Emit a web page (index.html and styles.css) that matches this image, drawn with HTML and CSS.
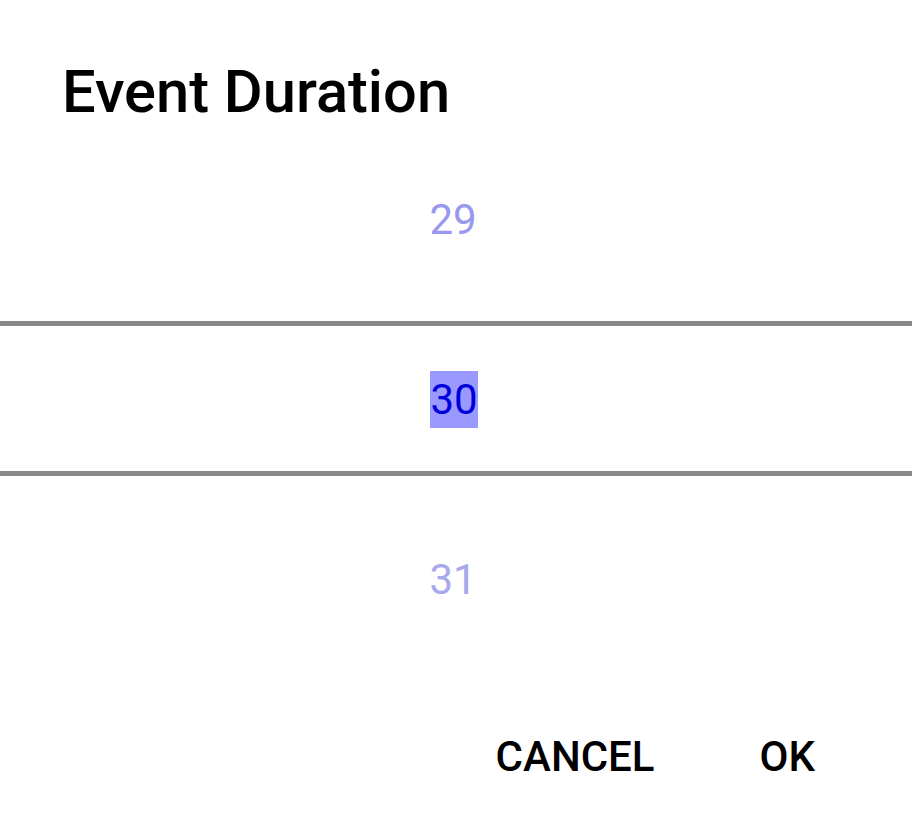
FILE: index.html
```html
<!DOCTYPE html>
<html lang="en">

<head>
    <meta charset="UTF-8">
    <meta name="viewport" content="width=device-width, initial-scale=1.0">
    <title>Event Duration</title>
    <link rel="stylesheet" href="styles.css">
</head>

<body>
    <div class="dialog">
        <h1 class="title">Event Duration</h1>

        <div class="picker">
            <div class="item item-prev">29</div>
            <div class="current">
                <div class="divider"></div>
                <div class="item-selected"><span class="value">30</span></div>
                <div class="divider"></div>
            </div>
            <div class="item item-next">31</div>
        </div>

        <div class="actions">
            <a class="btn">CANCEL</a>
            <a class="btn">OK</a>
        </div>
    </div>
</body>

</html>
```

FILE: styles.css
```css
* {
    margin: 0;
    padding: 0;
    box-sizing: border-box;
}

body {
    background: #fff;
    font-family: Roboto, "Liberation Sans", sans-serif;
    color: #000;
}

.dialog {
    width: 912px;
    height: 828px;
    display: flex;
    flex-direction: column;
}

.title {
    margin-top: 57px;
    padding-left: 62px;
    font-size: 59.6px;
    line-height: 70px;
    font-weight: 500;
    height: 73px;
}

/* number picker */
.picker {
    display: flex;
    flex-direction: column;
    padding-right: 6px;
}

.item {
    height: 180px;
    line-height: 180px;
    text-align: center;
    font-size: 42px;
}

.item-prev {
    color: #9898ee;
}

.item-next {
    color: #a8a8ec;
}

.current {
    height: 180px;
    padding-top: 11px;
    display: flex;
    flex-direction: column;
}

.divider {
    height: 5px;
    background: #888;
    margin-right: -6px;
}

.item-selected {
    height: 145px;
    display: flex;
    align-items: center;
    justify-content: center;
}

.value {
    display: inline-block;
    width: 48px;
    height: 57px;
    line-height: 57px;
    text-align: center;
    font-size: 42px;
    color: #0000dd;
    background: #9999ff;
    margin-top: 1px;
    margin-left: 2px;
}

.actions {
    margin-top: 62px;
    display: flex;
    justify-content: flex-end;
    gap: 105px;
    padding-right: 97px;
}

.btn {
    font-size: 42px;
    font-weight: 500;
    line-height: 50px;
}
```
